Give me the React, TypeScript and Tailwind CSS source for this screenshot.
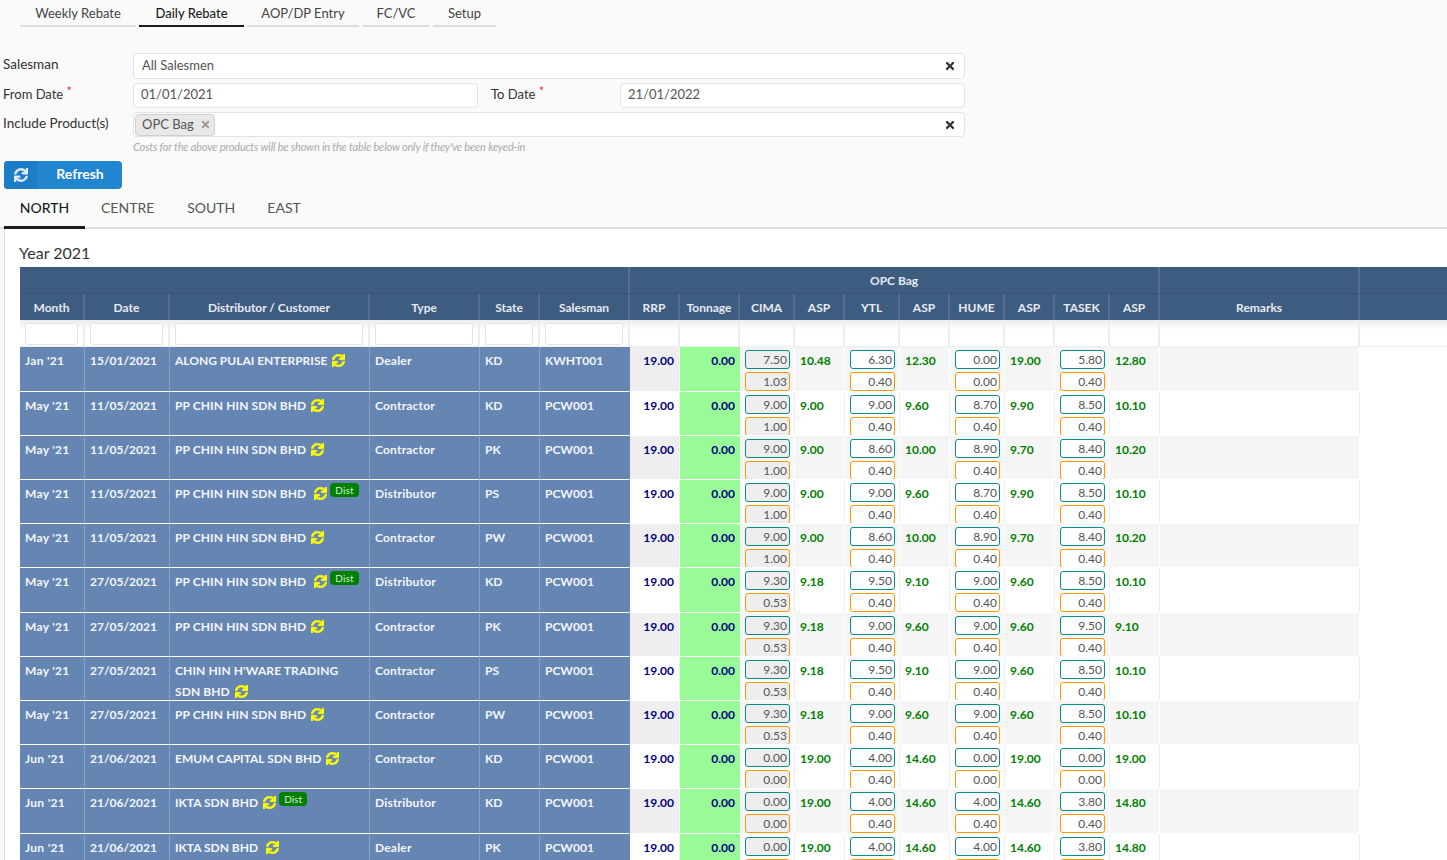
import { FaSync, FaTimes } from "react-icons/fa";

type Cost = { a: string; b: string; asp: string };
type Row = {
  month: string;
  date: string;
  name: string;
  type: string;
  state: string;
  rep: string;
  costs: Cost[];
  dist?: boolean;
  wide?: boolean;
  tall?: boolean;
};

const c = (a: string, b: string, asp: string): Cost => ({ a, b, asp });

const rows: Row[] = [
  { month: "Jan '21", date: "15/01/2021", name: "ALONG PULAI ENTERPRISE", type: "Dealer", state: "KD", rep: "KWHT001", tall: true, costs: [c("7.50", "1.03", "10.48"), c("6.30", "0.40", "12.30"), c("0.00", "0.00", "19.00"), c("5.80", "0.40", "12.80")] },
  { month: "May '21", date: "11/05/2021", name: "PP CHIN HIN SDN BHD", type: "Contractor", state: "KD", rep: "PCW001", costs: [c("9.00", "1.00", "9.00"), c("9.00", "0.40", "9.60"), c("8.70", "0.40", "9.90"), c("8.50", "0.40", "10.10")] },
  { month: "May '21", date: "11/05/2021", name: "PP CHIN HIN SDN BHD", type: "Contractor", state: "PK", rep: "PCW001", costs: [c("9.00", "1.00", "9.00"), c("8.60", "0.40", "10.00"), c("8.90", "0.40", "9.70"), c("8.40", "0.40", "10.20")] },
  { month: "May '21", date: "11/05/2021", name: "PP CHIN HIN SDN BHD", type: "Distributor", state: "PS", rep: "PCW001", dist: true, wide: true, costs: [c("9.00", "1.00", "9.00"), c("9.00", "0.40", "9.60"), c("8.70", "0.40", "9.90"), c("8.50", "0.40", "10.10")] },
  { month: "May '21", date: "11/05/2021", name: "PP CHIN HIN SDN BHD", type: "Contractor", state: "PW", rep: "PCW001", costs: [c("9.00", "1.00", "9.00"), c("8.60", "0.40", "10.00"), c("8.90", "0.40", "9.70"), c("8.40", "0.40", "10.20")] },
  { month: "May '21", date: "27/05/2021", name: "PP CHIN HIN SDN BHD", type: "Distributor", state: "KD", rep: "PCW001", dist: true, wide: true, tall: true, costs: [c("9.30", "0.53", "9.18"), c("9.50", "0.40", "9.10"), c("9.00", "0.40", "9.60"), c("8.50", "0.40", "10.10")] },
  { month: "May '21", date: "27/05/2021", name: "PP CHIN HIN SDN BHD", type: "Contractor", state: "PK", rep: "PCW001", costs: [c("9.30", "0.53", "9.18"), c("9.00", "0.40", "9.60"), c("9.00", "0.40", "9.60"), c("9.50", "0.40", "9.10")] },
  { month: "May '21", date: "27/05/2021", name: "CHIN HIN H'WARE TRADING SDN BHD", type: "Contractor", state: "PS", rep: "PCW001", costs: [c("9.30", "0.53", "9.18"), c("9.50", "0.40", "9.10"), c("9.00", "0.40", "9.60"), c("8.50", "0.40", "10.10")] },
  { month: "May '21", date: "27/05/2021", name: "PP CHIN HIN SDN BHD", type: "Contractor", state: "PW", rep: "PCW001", costs: [c("9.30", "0.53", "9.18"), c("9.00", "0.40", "9.60"), c("9.00", "0.40", "9.60"), c("8.50", "0.40", "10.10")] },
  { month: "Jun '21", date: "21/06/2021", name: "EMUM CAPITAL SDN BHD", type: "Contractor", state: "KD", rep: "PCW001", costs: [c("0.00", "0.00", "19.00"), c("4.00", "0.40", "14.60"), c("0.00", "0.00", "19.00"), c("0.00", "0.00", "19.00")] },
  { month: "Jun '21", date: "21/06/2021", name: "IKTA SDN BHD", type: "Distributor", state: "KD", rep: "PCW001", dist: true, tall: true, costs: [c("0.00", "0.00", "19.00"), c("4.00", "0.40", "14.60"), c("4.00", "0.40", "14.60"), c("3.80", "0.40", "14.80")] },
  { month: "Jun '21", date: "21/06/2021", name: "IKTA SDN BHD", type: "Dealer", state: "PK", rep: "PCW001", wide: true, costs: [c("0.00", "0.00", "19.00"), c("4.00", "0.40", "14.60"), c("4.00", "0.40", "14.60"), c("3.80", "0.40", "14.80")] },
];

const topTabs = [
  { label: "Weekly Rebate", w: "w-[116px]" },
  { label: "Daily Rebate", w: "w-[105px]", active: true },
  { label: "AOP/DP Entry", w: "w-[112px]" },
  { label: "FC/VC", w: "w-[68px]" },
  { label: "Setup", w: "w-[63px]" },
];

const colWidths = [65, 85, 200, 110, 60, 90, 50, 60, 55, 50, 55, 50, 55, 50, 55, 50, 200, 200];

const headCols = ["Month", "Date", "Distributor / Customer", "Type", "State", "Salesman", "RRP", "Tonnage", "CIMA", "ASP", "YTL", "ASP", "HUME", "ASP", "TASEK", "ASP", "Remarks", ""];

const filterInputs = ["w-[53px]", "w-[73px]", "w-[188px]", "w-[98px]", "w-[48px]", "w-[78px]"];

function ClearIcon() {
  return <FaTimes className="absolute right-[8px] top-[6px] text-[12px] text-[#333]" />;
}

function FieldBox({ children, className }: { children: React.ReactNode; className: string }) {
  return (
    <div className={`relative flex items-center rounded-[4px] border border-[#e3e3e3] bg-white text-[13px] text-[#555] ${className}`}>
      {children}
    </div>
  );
}

function CostBox({ value, tone, grey }: { value: string; tone: "teal" | "orange"; grey: boolean }) {
  return (
    <div
      className={`flex h-[19px] w-[45px] shrink-0 items-center justify-end rounded-[3px] border pr-[2px] text-[12px] font-normal text-[#555] ${
        tone === "teal" ? "border-[#0b8a8a]" : "border-[#ff9800]"
      } ${grey ? "bg-[#eeeeee]" : "bg-white"}`}
    >
      {value}
    </div>
  );
}

function CostCells({ cost, grey, inner, stripe }: { cost: Cost; grey: boolean; inner: string; stripe: string }) {
  return (
    <>
      <td className={`border-b border-r border-b-white p-0 align-top ${stripe}`}>
        <div className={`${inner} flex flex-col gap-[3px] overflow-hidden pl-[5px] pt-[3px]`}>
          <CostBox value={cost.a} tone="teal" grey={grey} />
          <CostBox value={cost.b} tone="orange" grey={grey} />
        </div>
      </td>
      <td className={`border-b border-r border-b-white p-0 align-top text-[#008000] ${stripe}`}>
        <div className={`${inner} pl-[5px] pt-[3px] leading-[21px]`}>{cost.asp}</div>
      </td>
    </>
  );
}

function DataRow({ row, odd }: { row: Row; odd: boolean }) {
  const inner = row.tall ? "h-[44px]" : "h-[43px]";
  const stripe = odd ? "bg-[#f5f5f5] border-r-white" : "bg-white border-r-[#eeeeee]";
  const left = "border-b border-r border-b-white border-r-[#8aa1c4] bg-[#6585b3] p-0 align-top text-[#f4f6fa]";
  const leftText = `${inner} overflow-hidden pl-[5px] pt-[3px] leading-[21px]`;
  return (
    <tr>
      <td className={left}><div className={`${leftText} tracking-[0.3px]`}>{row.month}</div></td>
      <td className={left}><div className={leftText}>{row.date}</div></td>
      <td className={left}>
        <div className={`${leftText} pr-[10px] ${row.name.includes("CHIN") ? "tracking-[0.1px]" : ""}`}>
          {row.name}
          <FaSync
            stroke="currentColor"
            strokeWidth={24}
            className={`inline-block align-[-2px] text-[13px] text-[#ffff00] ${row.wide ? "ml-[8px]" : "ml-[5px]"}`}
          />
          {row.dist && (
            <span className="ml-[3px] inline-block rounded-[4px] bg-[#008000] px-[5px] align-[4px] text-[10px] leading-[14px] font-normal text-[#d8e8d8]">
              Dist
            </span>
          )}
        </div>
      </td>
      <td className={left}><div className={`${leftText} tracking-[0.2px]`}>{row.type}</div></td>
      <td className={left}><div className={leftText}>{row.state}</div></td>
      <td className={`${left} border-r-[#6585b3]`}><div className={leftText}>{row.rep}</div></td>
      <td className={`border-b border-r border-b-white p-0 align-top text-[#000080] ${odd ? "border-r-white bg-[#eeeeee]" : "border-r-[#eeeeee] bg-white"}`}>
        <div className={`${inner} pr-[5px] pt-[3px] text-right leading-[21px]`}>19.00</div>
      </td>
      <td className="border-b border-b-white bg-[#98fb98] p-0 align-top text-[#000080]">
        <div className={`${inner} pr-[5px] pt-[3px] text-right leading-[21px]`}>0.00</div>
      </td>
      {row.costs.map((cost, i) => (
        <CostCells key={i} cost={cost} grey={i === 0} inner={inner} stripe={stripe} />
      ))}
      <td className={`border-b border-r border-b-white p-0 ${stripe}`} />
      <td className="bg-white p-0" />
    </tr>
  );
}

export default function App() {
  return (
    <div className="h-[860px] w-[1447px] overflow-hidden bg-[#fafafa] font-['Lato',sans-serif] text-[13.5px] text-[#333]">
      <div className="flex gap-[3px] pl-[20px]">
        {topTabs.map((t) => (
          <div
            key={t.label}
            className={`flex h-[27px] items-center justify-center border-b-2 pt-[2px] text-[13px] ${t.w} ${
              t.active ? "border-[#1b1c1d] font-medium text-[#1b1c1d]" : "border-[#dddddd] text-[#444]"
            }`}
          >
            {t.label}
          </div>
        ))}
      </div>

      <div className="mt-[26px] flex h-[26px] items-center">
        <div className="w-[133px] pb-[3px] pl-[3px]">Salesman</div>
        <FieldBox className="h-[26px] w-[832px] pl-[8px]">
          All Salesmen
          <ClearIcon />
        </FieldBox>
      </div>

      <div className="mt-[4px] flex h-[25px] items-center">
        <div className="w-[133px] pb-[1px] pl-[3px] text-[13px]">
          From Date <span className="relative -top-[3px] text-[#e03a3a]">*</span>
        </div>
        <FieldBox className="h-[25px] w-[345px] pb-[2px] pl-[7px]">01/01/2021</FieldBox>
        <div className="ml-[13px] w-[129px] pb-[1px] text-[13px]">
          To Date <span className="relative -top-[3px] text-[#e03a3a]">*</span>
        </div>
        <FieldBox className="h-[25px] w-[345px] pb-[2px] pl-[7px]">21/01/2022</FieldBox>
      </div>

      <div className="mt-[4px] flex h-[25px] items-center">
        <div className="w-[133px] pb-[3px] pl-[3px]">Include Product(s)</div>
        <FieldBox className="h-[25px] w-[832px] pl-[1px]">
          <span className="flex h-[22px] w-[80px] items-center gap-[6px] rounded-[4px] border border-[#cfcfcf] bg-[#e8e8e8] pl-[6px]">
            OPC Bag
            <FaTimes className="text-[11px] text-[#999]" />
          </span>
          <ClearIcon />
        </FieldBox>
      </div>

      <p className="ml-[133px] mt-[2px] h-[16px] text-[11px] leading-[16px] tracking-[-0.18px] text-[#aaaaaa] italic">
        Costs for the above products will be shown in the table below only if they&apos;ve been keyed-in
      </p>

      <button className="ml-[4px] mt-[6px] flex h-[28px] w-[118px] overflow-hidden rounded-[4px] bg-[#2185d0] text-[14px] font-bold text-white">
        <span className="flex h-full w-[33px] items-center justify-center bg-[#1c7cc5]">
          <FaSync stroke="currentColor" strokeWidth={16} className="text-[14px] text-[#e3eff9]" />
        </span>
        <span className="flex h-full flex-1 items-center justify-center pb-[3px] pl-[1px]">Refresh</span>
      </button>

      <div className="mt-[5px] flex h-[35px] border-b-2 border-[#dddddd] text-[14px]">
        <div className="ml-[4px] -mb-[2px] flex h-[35px] w-[81px] items-center justify-center border-b-[3px] border-[#1b1c1d] pb-[5px] font-medium text-[#1b1c1d]">
          NORTH
        </div>
        <div className="flex h-[33px] items-center pb-[6px] text-[#555]">
          <span className="ml-[16px]">CENTRE</span>
          <span className="ml-[33px]">SOUTH</span>
          <span className="ml-[32px]">EAST</span>
        </div>
      </div>

      <div className="ml-[4px] h-[640px] border-l border-[#dddddd] bg-white pl-[15px]">
        <div className="-ml-[1px] h-[38px] pt-[12px] text-[16px] leading-[23px] text-[#333]">Year 2021</div>
        <table className="w-[1540px] table-fixed border-separate border-spacing-0 text-[12px] font-bold">
          <colgroup>
            {colWidths.map((w, i) => (
              <col key={i} style={{ width: w }} />
            ))}
          </colgroup>
          <thead>
            <tr className="h-[27px] bg-[#3e5b80] text-[#e6ebf2]">
              <th colSpan={6} className="border-b border-r-2 border-b-[#375274] border-r-[#54708f] p-0" />
              <th colSpan={10} className="border-b border-r-2 border-b-[#375274] border-r-[#54708f] p-0 pt-[2px] font-bold">
                OPC Bag
              </th>
              <th className="border-b border-r-2 border-b-[#375274] border-r-[#54708f] p-0" />
              <th className="border-b border-b-[#375274] p-0" />
            </tr>
            <tr className="h-[26px] bg-[#3e5b80] text-[#e6ebf2]">
              {headCols.map((h, i) => (
                <th key={i} className="border-r-2 border-r-[#54708f] p-0 pt-[2px] text-center font-bold">
                  {h}
                </th>
              ))}
            </tr>
            <tr className="h-[27px]">
              {headCols.map((_, i) => (
                <th
                  key={i}
                  className="border-b border-r-2 border-b-[#eeeeee] border-r-[#eeeeee] bg-linear-to-b from-[#ececec] to-white to-[40%] p-0 pl-[5px] text-left align-top"
                >
                  {i < 6 && (
                    <input
                      aria-label={headCols[i]}
                      className={`mt-[3px] block h-[22px] rounded-[3px] border border-[#e3e3e3] bg-white ${filterInputs[i]}`}
                    />
                  )}
                </th>
              ))}
            </tr>
          </thead>
          <tbody>
            {rows.map((r, i) => (
              <DataRow key={i} row={r} odd={i % 2 === 0} />
            ))}
          </tbody>
        </table>
      </div>
    </div>
  );
}
